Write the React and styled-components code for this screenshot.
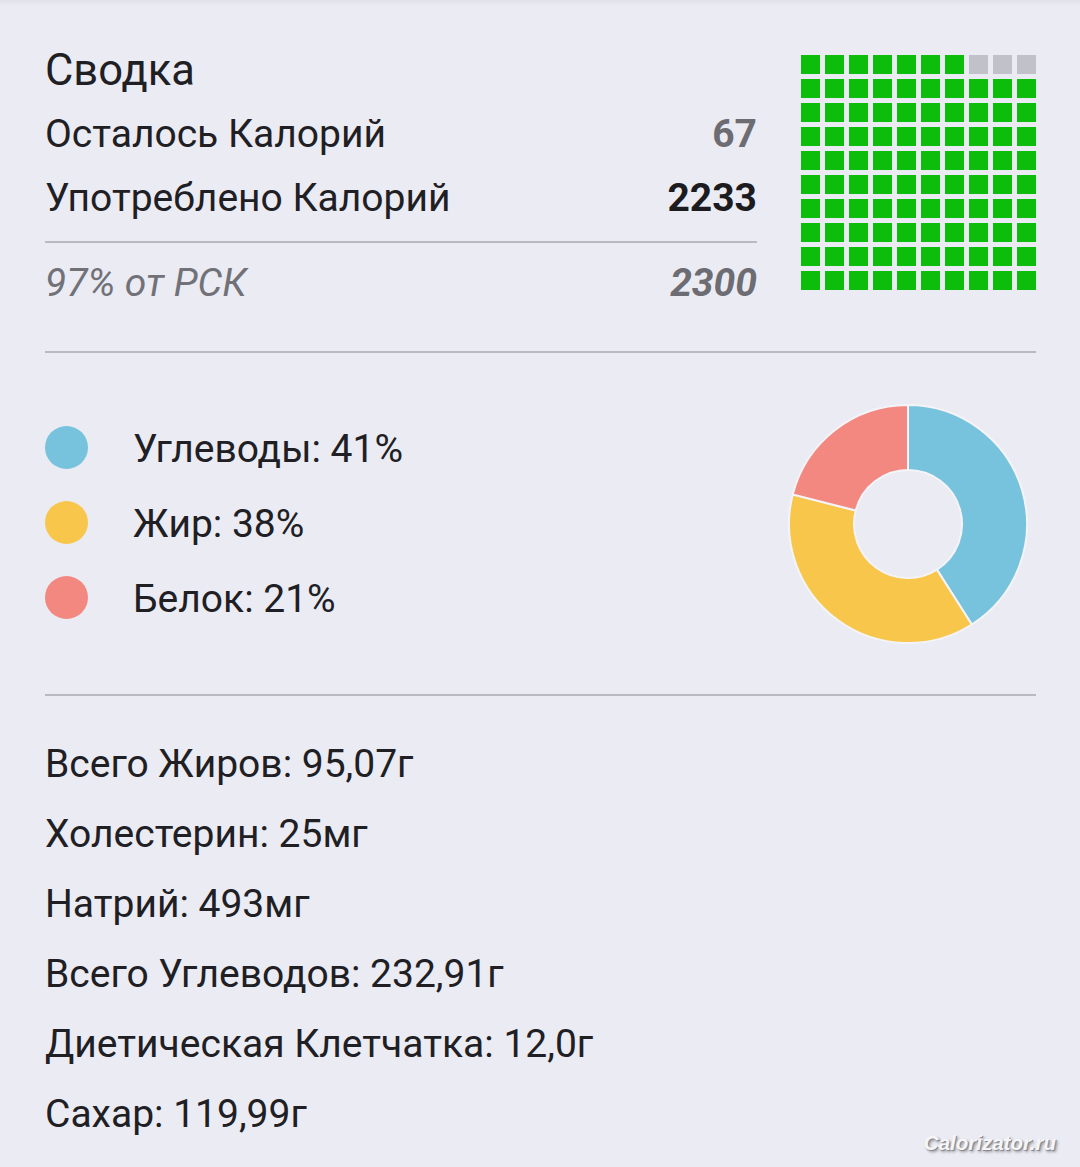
import React from 'react';
import styled, { createGlobalStyle } from 'styled-components';

const GlobalStyle = createGlobalStyle`
    html, body {
        margin: 0;
        padding: 0;
        background: #ebebf3;
    }
    body {
        font-family: Roboto, "Noto Sans", "Liberation Sans", sans-serif;
        color: #202024;
    }
`;

const summary = {
    left: 67,
    eaten: 2233,
    percent: 97,
    goal: 2300,
};

const macros = [
    { name: 'Углеводы', value: 41, color: '#77c2dc' },
    { name: 'Жир', value: 38, color: '#f9c64c' },
    { name: 'Белок', value: 21, color: '#f38880' },
];

const nutrients = [
    'Всего Жиров: 95,07г',
    'Холестерин: 25мг',
    'Натрий: 493мг',
    'Всего Углеводов: 232,91г',
    'Диетическая Клетчатка: 12,0г',
    'Сахар: 119,99г',
];

// 100 cells, the last few (top-right) are the calories still left
const Waffle = ({ filled }) => {
    const cells = [];
    const emptyCount = 100 - filled;
    for (let i = 0; i < 100; i++) {
        const row = Math.floor(i / 10);
        const col = i % 10;
        const empty = row === 0 && col >= 10 - emptyCount;
        cells.push(<Cell key={i} $empty={empty} />);
    }
    return <WaffleGrid>{cells}</WaffleGrid>;
};

const Donut = ({ data }) => {
    const cx = 120;
    const cy = 120;
    const R = 119;
    const r = 54;
    let start = -90;
    const toXY = (deg, rad) => {
        const a = (deg * Math.PI) / 180;
        return [cx + rad * Math.cos(a), cy + rad * Math.sin(a)];
    };
    const slices = data.map((d) => {
        const end = start + (d.value / 100) * 360;
        const large = end - start > 180 ? 1 : 0;
        const [x1, y1] = toXY(start, R);
        const [x2, y2] = toXY(end, R);
        const [x3, y3] = toXY(end, r);
        const [x4, y4] = toXY(start, r);
        const path = `M${x1} ${y1} A${R} ${R} 0 ${large} 1 ${x2} ${y2} L${x3} ${y3} A${r} ${r} 0 ${large} 0 ${x4} ${y4} Z`;
        start = end;
        return <path key={d.name} d={path} fill={d.color} stroke="#f4f4f8" strokeWidth="2" />;
    });
    return (
        <svg width="240" height="240" viewBox="0 0 240 240">
            {slices}
        </svg>
    );
};

const App = () => {
    return (
        <Page>
            <GlobalStyle />
            <Summary>
                <SummaryText>
                    <Title>Сводка</Title>
                    <Row>
                        <span>Осталось Калорий</span>
                        <Value $muted>{summary.left}</Value>
                    </Row>
                    <Row>
                        <span>Употреблено Калорий</span>
                        <Value>{summary.eaten}</Value>
                    </Row>
                    <ThinLine />
                    <Row $italic>
                        <span>{summary.percent}% от РСК</span>
                        <Value $muted>{summary.goal}</Value>
                    </Row>
                </SummaryText>
                <Waffle filled={summary.percent} />
            </Summary>

            <Divider />

            <MacroSection>
                <Legend>
                    {macros.map((m) => (
                        <LegendItem key={m.name}>
                            <Dot $color={m.color} />
                            <span>{m.name}: {m.value}%</span>
                        </LegendItem>
                    ))}
                </Legend>
                <Donut data={macros} />
            </MacroSection>

            <Divider />

            <NutrientList>
                {nutrients.map((n) => (
                    <Nutrient key={n}>{n}</Nutrient>
                ))}
            </NutrientList>

            <Watermark>Calorizator.ru</Watermark>
        </Page>
    );
};

const Page = styled.div`
    position: relative;
    min-height: 1167px;
    box-sizing: border-box;
    padding: 0 44px 0 45px;
    background: linear-gradient(to bottom, #e2e2e9 0px, #ebebf3 6px);
    overflow: hidden;
`;

const Summary = styled.section`
    display: flex;
    justify-content: space-between;
    align-items: flex-start;
    padding: 40px 0 36px;
`;

const SummaryText = styled.div`
    width: 712px;
    display: flex;
    flex-direction: column;
`;

const Title = styled.h1`
    margin: 0;
    font-size: 43.5px;
    font-weight: 400;
    line-height: 62px;
    color: #202024;
`;

const Row = styled.div`
    display: flex;
    justify-content: space-between;
    font-size: 39px;
    line-height: 64px;
    color: ${(p) => (p.$italic ? '#717178' : '#202024')};
    font-style: ${(p) => (p.$italic ? 'italic' : 'normal')};
`;

const Value = styled.span`
    font-weight: 700;
    color: ${(p) => (p.$muted ? '#6c6c72' : '#1c1c20')};
`;

const ThinLine = styled.div`
    height: 2px;
    background: #b9b9c1;
    margin: 11px 0 8px;
`;

const WaffleGrid = styled.div`
    display: grid;
    grid-template-columns: repeat(10, 19px);
    grid-auto-rows: 19px;
    gap: 5px;
    margin-top: 15px;
`;

const Cell = styled.div`
    background: ${(p) => (p.$empty ? '#c1c1ca' : '#0cbd0c')};
`;

const Divider = styled.hr`
    margin: 0;
    border: none;
    height: 2px;
    background: #b9b9c1;
`;

const MacroSection = styled.section`
    height: 341px;
    display: flex;
    align-items: center;
    justify-content: space-between;
    padding-right: 8px;
`;

const Legend = styled.div`
    display: flex;
    flex-direction: column;
    margin-top: 2px;
`;

const LegendItem = styled.div`
    display: flex;
    align-items: center;
    gap: 45px;
    font-size: 39px;
    line-height: 75px;
    color: #202024;
`;

const Dot = styled.span`
    width: 43px;
    height: 43px;
    border-radius: 50%;
    background: ${(p) => p.$color};
    flex: none;
    margin-top: -4px;
`;

const NutrientList = styled.div`
    display: flex;
    flex-direction: column;
    padding-top: 33px;
`;

const Nutrient = styled.div`
    font-size: 39px;
    line-height: 70px;
    color: #202024;
`;

const Watermark = styled.div`
    position: absolute;
    right: 24px;
    bottom: 12px;
    font-family: "Liberation Sans", Arial, sans-serif;
    font-size: 20.5px;
    font-weight: 700;
    font-style: italic;
    color: #f6f6f8;
    text-shadow: 1px 1px 0 #8a8a90, 2px 2px 3px rgba(0, 0, 0, 0.4);
`;

export default App;
